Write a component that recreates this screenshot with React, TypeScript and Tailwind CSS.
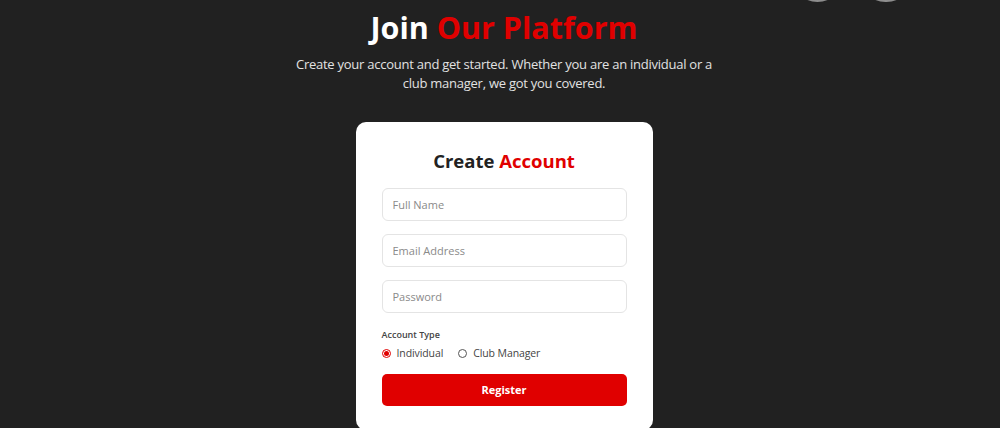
import React, { useState } from 'react';

type AccountType = 'individual' | 'club';

const Field: React.FC<{ placeholder: string; type?: string }> = ({ placeholder, type = 'text' }) => (
  <input
    type={type}
    placeholder={placeholder}
    className="w-full h-[33px] rounded-[6px] border border-[#e4e4e4] bg-white px-[10px] text-[11px] text-[#333] placeholder:text-[#8a8a8a] outline-none"
  />
);

export default function App() {
  const [accountType, setAccountType] = useState<AccountType>('individual');

  const radioClass = (t: AccountType) =>
    accountType === t
      ? 'w-[9px] h-[9px] rounded-full border border-[#e00000] flex items-center justify-center'
      : 'w-[9px] h-[9px] rounded-full border border-[#555] flex items-center justify-center';

  return (
    <div
      className="relative w-full h-[428px] overflow-hidden bg-[#212121] pl-[8px] flex flex-col items-center"
      style={{ fontFamily: '"Open Sans", Lato, sans-serif' }}
    >
      {/* cut-off decorations at the top right */}
      <div className="absolute left-[791px] top-[-51px] w-[53px] h-[53px] rounded-full bg-[radial-gradient(circle_at_50%_55%,#e0e0e0,#8a8a8a_60%,#2a2a2a)]" />
      <div className="absolute left-[859px] top-[-51px] w-[54px] h-[53px] rounded-full bg-[radial-gradient(circle_at_50%_55%,#e0e0e0,#8a8a8a_60%,#2a2a2a)]" />

      <h1 className="mt-[8px] text-[30.5px] leading-[38px] font-bold text-white">
        Join <span className="text-[#e00000]">Our Platform</span>
      </h1>
      <p className="mt-[9px] w-[430px] text-center text-[13px] tracking-[-0.25px] leading-[19px] text-[#e2e2e2]">
        Create your account and get started. Whether you are an individual or a club manager, we got you covered.
      </p>

      <div className="mt-[29px] w-[297px] rounded-[10px] bg-white px-[26px] pt-[26px] pb-[24px]">
        <h2 className="text-center text-[18.5px] leading-[26px] font-bold text-[#222]">
          Create <span className="text-[#e00000]">Account</span>
        </h2>
        <div className="mt-[14px] flex flex-col gap-[13px]">
          <Field placeholder="Full Name" />
          <Field placeholder="Email Address" type="email" />
          <Field placeholder="Password" type="password" />
        </div>

        <div className="mt-[15px] text-[9px] leading-[13px] font-semibold text-[#444]">Account Type</div>
        <div className="mt-[5px] flex items-center gap-[15px] text-[10.5px] tracking-[-0.1px] text-[#444]">
          <button className="flex items-center gap-[6px]" onClick={() => setAccountType('individual')}>
            <span className={radioClass('individual')}>
              {accountType === 'individual' && <span className="w-[5px] h-[5px] rounded-full bg-[#e00000]" />}
            </span>
            Individual
          </button>
          <button className="flex items-center gap-[6px]" onClick={() => setAccountType('club')}>
            <span className={radioClass('club')}>
              {accountType === 'club' && <span className="w-[5px] h-[5px] rounded-full bg-[#e00000]" />}
            </span>
            Club Manager
          </button>
        </div>

        <button className="mt-[12px] w-full h-[32px] rounded-[5px] bg-[#e00000] text-white text-[11px] font-bold">
          Register
        </button>
      </div>
    </div>
  );
}
